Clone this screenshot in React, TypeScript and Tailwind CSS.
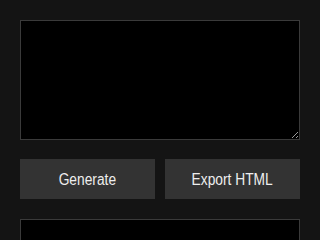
import React from "react";

export default function App() {
  return (
    <div className="min-h-[240px] bg-[#141414] p-5 flex flex-col" style={{ fontFamily: '"Liberation Sans", Arial, sans-serif' }}>
      <textarea className="block w-[280px] h-[120px] bg-black border border-[#3a3a3a] text-white resize-y outline-none p-2" />
      <div className="mt-[19px] flex gap-[10px]">
        <button className="w-[135px] h-10 bg-[#333333] text-[#eeeeee] text-[16px] flex items-center justify-center">
          <span className="inline-block scale-x-[0.86] translate-y-[0.5px]">Generate</span>
        </button>
        <button className="w-[135px] h-10 bg-[#333333] text-[#eeeeee] text-[16px] flex items-center justify-center">
          <span className="inline-block scale-x-[0.86] translate-y-[0.5px]">Export HTML</span>
        </button>
      </div>
      <div className="mt-5 w-[280px] h-[120px] bg-black border border-[#3a3a3a]" />
    </div>
  );
}
